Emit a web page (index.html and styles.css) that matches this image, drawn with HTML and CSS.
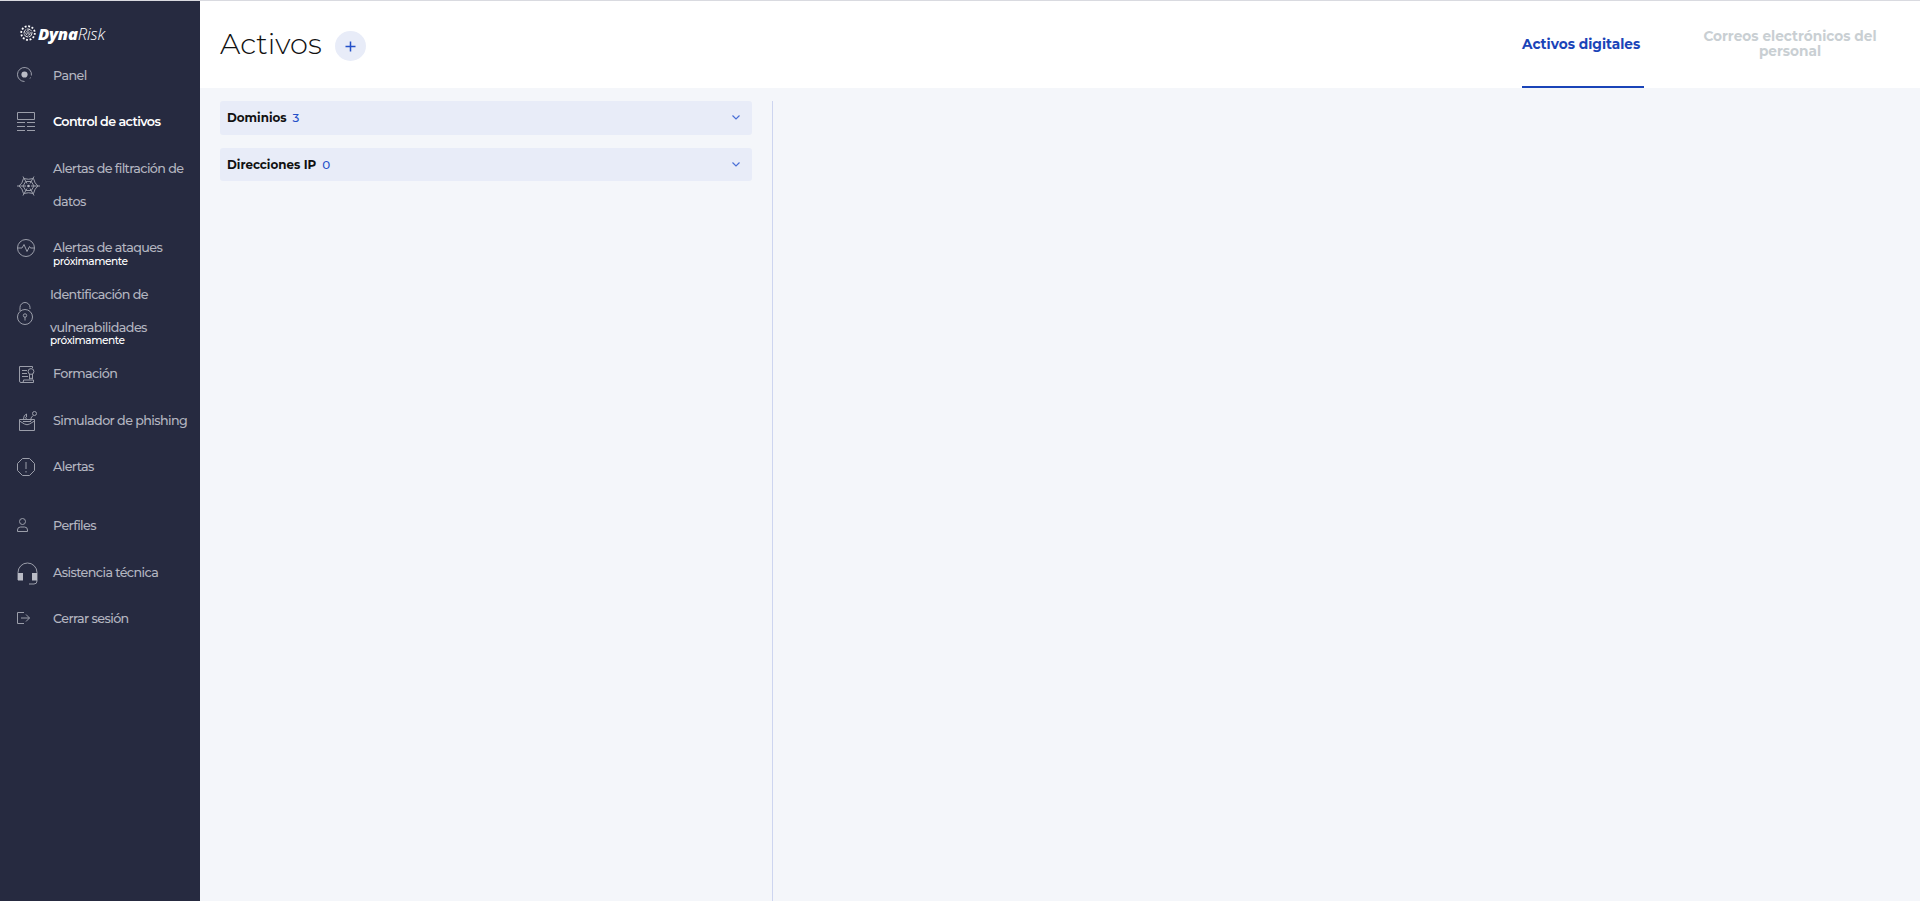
FILE: index.html
```
<!DOCTYPE html>
<html lang="es">
<head>
  <meta charset="UTF-8">
  <meta name="viewport" content="width=device-width, initial-scale=1.0">
  <title>DynaRisk - Activos</title>
  <link rel="stylesheet" href="styles.css">
</head>
<body>
  <aside class="sidebar">
    <div class="logo">
      <svg class="logo-mark" width="16" height="16" viewBox="0 0 16 16" fill="none" stroke="#fff">
        <circle cx="8" cy="8" r="6.8" stroke-width="1.8" stroke-dasharray="1.9 1.66" />
        <circle cx="8" cy="8" r="4" stroke-width="0.9" stroke-dasharray="5 0.8" />
        <circle cx="8" cy="8" r="2.2" stroke-width="0.8" stroke-dasharray="3 0.8" />
        <circle cx="8" cy="8" r="0.6" stroke-width="0.6" />
      </svg>
      <span class="logo-bold">Dyna</span><span class="logo-light">Risk</span>
    </div>
    <nav class="menu">
      <a class="item">
        <span class="icon raised"><svg width="15" height="15" viewBox="0 0 15 15"><path d="M7.500 14.500A7 7 0 1 1 14.400 8.500M13.500 10.500l-.5 1" /><circle cx="7.500" cy="7.500" r="3.100" class="fill" /></svg></span>
        <span class="label">Panel</span>
      </a>
      <a class="item active">
        <span class="icon"><svg width="18" height="19" viewBox="0 0 18 19"><path d="M.5.5h17v7H.5zM0 10.500h8M10 10.500h8M0 14.500h8M10 14.500h8M0 18.500h8M10 18.500h8" /></svg></span>
        <span class="label">Control de activos</span>
      </a>
      <a class="item">
        <span class="icon lowered"><svg width="23" height="20" viewBox="0 0 23 20"><path d="M0 10h9M14 10h9M6 .5l4 7M17 .5l-4 7M6 19.500l4-7M17 19.500l-4-7M6.500 2.500q5 1.500 10 0q1 5 4.500 7.500q-3.500 2.500-4.500 7.500q-5-1.500-10 0q-1-5-4.500-7.500q3.500-2.500 4.500-7.500zM8.700 5.500h5.600l2.700 4.500-2.700 4.500H8.700L6 10z" /><circle cx="11.500" cy="10" r="1.300" class="fill" /></svg></span>
        <span class="label">Alertas de filtración de datos</span>
      </a>
      <a class="item">
        <span class="icon"><svg width="18" height="18" viewBox="0 0 18 18"><circle cx="9" cy="9" r="8.500" /><path d="M1 9h4l2-3.500 3 7 2.500-5L13.500 9H17" /></svg></span>
        <span class="label">Alertas de ataques<small>próximamente</small></span>
      </a>
      <a class="item shifted">
        <span class="icon"><svg width="16" height="23" viewBox="0 0 16 23"><circle cx="8" cy="15" r="7.500" /><path d="M3 9V5.500a5 5 0 0 1 10 0V7M8 15v3.500" /><circle cx="8" cy="13.500" r="1.700" /></svg></span>
        <span class="label">Identificación de vulnerabilidades<small>próximamente</small></span>
      </a>
      <a class="item">
        <span class="icon inset lowered"><svg width="16" height="17" viewBox="0 0 16 17"><path d="M13.500 2V.5H.5v14.500q0 1.500 1.500 1.500h12.500v-2.500H4.500v1q0 1.500-1.500 1.500M3 4.500h5M3 7.500h5M3 10.500h6M10.500 8v5l1.500-1 1.500 1V8" /><circle cx="12" cy="5.500" r="2.900" /></svg></span>
        <span class="label">Formación</span>
      </a>
      <a class="item">
        <span class="icon inset lowered"><svg width="18" height="20" viewBox="0 0 18 20"><path d="M.5 8.500h15v11H.5zM.5 10l5 3q2.500 1.500 5 0l5-3M4 10.500h8M4.500 8q0-4 3-5v3q-2 0 0 2M12 10V7l2-2.500" /><circle cx="15.500" cy="2.500" r="2" /></svg></span>
        <span class="label">Simulador de phishing</span>
      </a>
      <a class="item">
        <span class="icon"><svg width="18" height="18" viewBox="0 0 18 18"><path d="M5.500.5h7l5 5v7l-5 5h-7l-5-5v-7zM9 4v7M9 13v1.500" /></svg></span>
        <span class="label">Alertas</span>
      </a>
      <a class="item second">
        <span class="icon raised"><svg width="11" height="14" viewBox="0 0 11 14"><circle cx="5.500" cy="3.500" r="3" /><path d="M.5 13.500v-1.500q0-3 3-3h4q3 0 3 3v1.500z" /></svg></span>
        <span class="label">Perfiles</span>
      </a>
      <a class="item">
        <span class="icon lowered"><svg width="21" height="23" viewBox="0 0 21 23"><path d="M1 18V10.500a9.500 9.500 0 0 1 19 0V19q0 3-3 3h-5" /><path class="fill" d="M1 11h5v7.500H1zM15 11h5v7.500h-5z" /></svg></span>
        <span class="label">Asistencia técnica</span>
      </a>
      <a class="item">
        <span class="icon raised"><svg width="13" height="12" viewBox="0 0 13 12"><path d="M7 .5H.5v11H7M4 6h8.500M9 2.500L12.500 6 9 9.500" /></svg></span>
        <span class="label">Cerrar sesión</span>
      </a>
    </nav>
  </aside>
  <main class="content">
    <header class="topbar">
      <h1>Activos</h1>
      <button class="add" aria-label="Agregar"><svg width="11" height="11" viewBox="0 0 11 11"><path d="M5.500.5v10M.5 5.500h10" /></svg></button>
      <div class="tabs">
        <a class="tab current">Activos digitales</a>
        <a class="tab staff">Correos electrónicos del personal</a>
      </div>
    </header>
    <div class="panels">
      <section class="groups">
        <div class="group">
          <b>Dominios</b><span>3</span>
          <svg width="8" height="5" viewBox="0 0 8 5"><path d="M.5.500L4 4 7.500.500" /></svg>
        </div>
        <div class="group">
          <b>Direcciones IP</b><span>0</span>
          <svg width="8" height="5" viewBox="0 0 8 5"><path d="M.5.500L4 4 7.500.500" /></svg>
        </div>
      </section>
      <section class="detail"></section>
    </div>
  </main>
</body>
</html>
```
FILE: styles.css
```
* {
  box-sizing: border-box;
}
body {
  margin: 0;
  height: 100vh;
  display: flex;
  border-top: 1px solid #d9dae0;
  font-family: Montserrat, Inter, sans-serif;
  background-color: #f4f6fa;
  overflow: hidden;
}
.sidebar {
  width: 200px;
  flex-shrink: 0;
  background-color: #262a40;
}
.logo {
  display: flex;
  align-items: center;
  height: 24px;
  margin: 20px 0 0 20px;
  color: #fff;
  font-family: "Open Sans", sans-serif;
  font-size: 16.5px;
  font-style: italic;
}
.logo-mark {
  margin-right: 2px;
}
.logo-bold {
  font-weight: 800;
  letter-spacing: -0.2px;
}
.logo-light {
  font-weight: 300;
  letter-spacing: -0.1px;
}
.menu {
  padding: 13.8px 0 0 17px;
}
.item {
  display: flex;
  align-items: center;
  margin-bottom: 13.5px;
  color: #b4b6c0;
  font-size: 12.7px;
  font-weight: 500;
  letter-spacing: -0.58px;
  line-height: 33px;
}
.item.active {
  color: #fff;
  font-weight: 600;
}
.item.second {
  margin-top: 26px;
}
.icon {
  display: flex;
  width: 36px;
  flex-shrink: 0;
}
.icon.inset {
  padding-left: 2px;
}
.icon.raised {
  padding-bottom: 2px;
}
.icon.lowered {
  padding-top: 2px;
}
.shifted .icon {
  width: 33px;
  padding-top: 5px;
}
.icon svg {
  fill: none;
  stroke: #9b9eaa;
  stroke-width: 1;
}
.icon .fill {
  fill: #b9bbc5;
  stroke: none;
}
.label {
  width: 140px;
}
.label small {
  display: block;
  margin: -8.5px 0 -3.5px;
  color: #fff;
  font-size: 10.6px;
  letter-spacing: -0.45px;
  line-height: 12px;
}
.content {
  flex: 1;
  display: flex;
  flex-direction: column;
}
.topbar {
  display: flex;
  align-items: center;
  height: 87px;
  padding-left: 20px;
  background-color: #fff;
}
h1 {
  width: 115px;
  margin: 0;
  padding-bottom: 2px;
  color: #111;
  font-size: 28.8px;
  font-weight: 300;
}
.add {
  display: flex;
  align-items: center;
  justify-content: center;
  width: 31px;
  height: 30px;
  margin-top: 3px;
  padding: 0;
  border: none;
  border-radius: 50%;
  background-color: #e8ecf8;
}
.add svg {
  stroke: #2450c8;
  stroke-width: 1.5;
}
.tabs {
  display: flex;
  height: 100%;
  margin-left: auto;
}
.tab {
  display: flex;
  align-items: center;
  font-size: 13.7px;
  font-weight: 700;
  line-height: 15px;
}
.tab.current {
  width: 122px;
  color: #1a44b8;
  border-bottom: 2px solid #1a44b8;
  padding-top: 2px;
}
.tab.staff {
  width: 180px;
  margin: 0 40px 0 56px;
  padding-bottom: 2px;
  color: #c9cfd3;
  text-align: center;
}
.panels {
  flex: 1;
  display: flex;
  padding: 13px 0 0 20px;
}
.groups {
  width: 532px;
  margin-right: 20px;
}
.group {
  display: flex;
  align-items: center;
  height: 33.5px;
  margin-bottom: 13.3px;
  padding: 0 12px 1px 7px;
  border-radius: 3px;
  background-color: #e8ecf8;
  color: #111;
  font-size: 11.9px;
}
.group b {
  margin-right: 6px;
}
.group span {
  color: #2450c8;
  font-weight: 500;
}
.group svg {
  margin-left: auto;
  fill: none;
  stroke: #4a6fd6;
  stroke-width: 1.2;
}
.detail {
  flex: 1;
  border-left: 1px solid #cdd5f0;
}
```
